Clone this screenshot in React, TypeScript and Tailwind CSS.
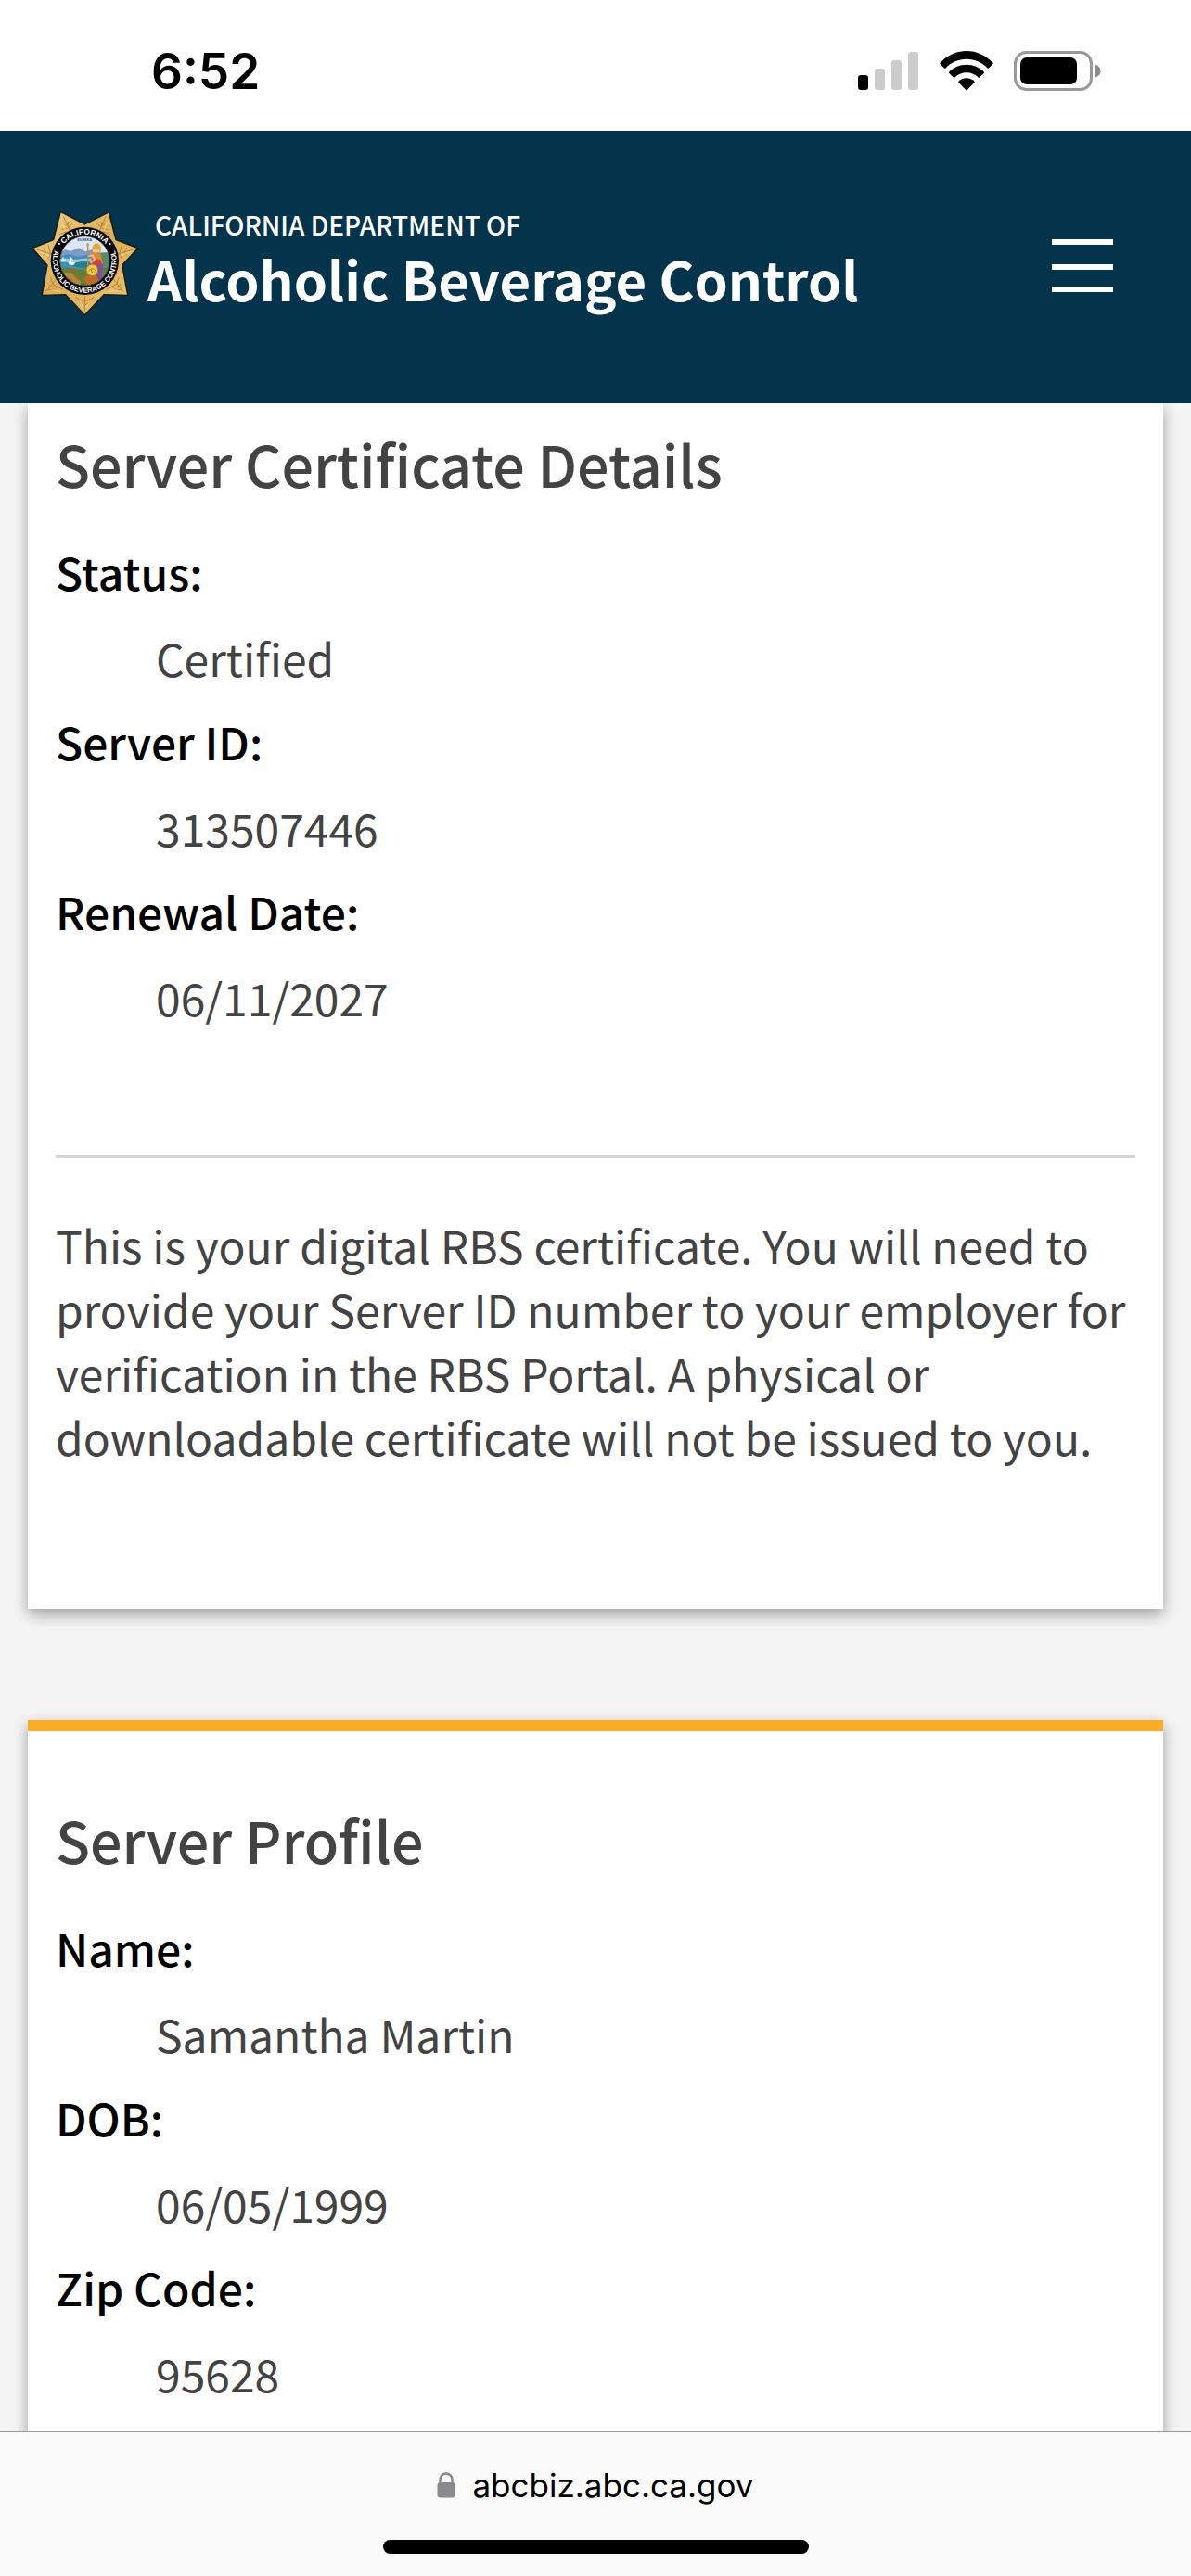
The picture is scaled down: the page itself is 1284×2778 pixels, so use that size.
import React from 'react';

type Field = {
  label: string;
  value: string;
};

const certificateFields: Field[] = [
  { label: 'Status:', value: 'Certified' },
  { label: 'Server ID:', value: '313507446' },
  { label: 'Renewal Date:', value: '06/11/2027' }
];

const profileFields: Field[] = [
  { label: 'Name:', value: 'Samantha Martin' },
  { label: 'DOB:', value: '06/05/1999' },
  { label: 'Zip Code:', value: '95628' }
];

const StatusBar: React.FC = () => (
  <div className="h-[141px] shrink-0 bg-white flex items-center justify-between pl-[163px] pr-[97px] pt-3">
    <span className="font-['Inter',sans-serif] font-semibold text-[53px] leading-[60px] text-black">6:52</span>
    <div className="flex items-center">
      {/* Signal */}
      <svg className="w-[66px] h-[44px]" viewBox="0 0 66 44" aria-hidden="true">
        <rect x="0" y="26" width="11" height="16" rx="3" fill="#000" />
        <rect x="18" y="19" width="11" height="23" rx="3" fill="#ccc" />
        <rect x="36" y="10" width="11" height="32" rx="3" fill="#ccc" />
        <rect x="54" y="1" width="11" height="41" rx="3" fill="#ccc" />
      </svg>
      {/* Wifi */}
      <svg className="w-[58px] h-[44px] ml-[22px]" viewBox="0 0 58 44" aria-hidden="true">
        <path d="M0.5 12.8C8 4.8 18 0 29 0s21 4.8 28.5 12.8a1 1 0 0 1 0 1.3l-4.6 4.4a1 1 0 0 1-1.3 0C45.6 12.3 37.6 8.8 29 8.8S12.4 12.3 6.4 18.5a1 1 0 0 1-1.3 0L0.5 14.1a1 1 0 0 1 0-1.3z" />
        <path d="M10.3 22.6C15 17.7 21.7 14.8 29 14.8s14 2.9 18.7 7.8a1 1 0 0 1 0 1.3l-4.7 4.5a1 1 0 0 1-1.3 0C38.5 25.2 34 23.2 29 23.2s-9.5 2-12.7 5.2a1 1 0 0 1-1.3 0l-4.7-4.5a1 1 0 0 1 0-1.3z" />
        <path d="M20.5 32.8c2.2-2.2 5.2-3.6 8.5-3.6s6.3 1.4 8.5 3.6a1 1 0 0 1 0 1.3l-7.8 7.8a1 1 0 0 1-1.4 0l-7.8-7.8a1 1 0 0 1 0-1.3z" />
      </svg>
      {/* Battery */}
      <svg className="w-[94px] h-[44px] ml-[22px]" viewBox="0 0 94 44" aria-hidden="true">
        <rect x="1.5" y="1.5" width="82" height="40" rx="12" fill="none" stroke="#999" strokeWidth="3" />
        <rect x="7" y="7" width="61" height="29" rx="7" />
        <path d="M88 14.5c3.5 1.3 5.5 4 5.5 7s-2 5.7-5.5 7z" fill="#8a8a8a" />
      </svg>
    </div>
  </div>
);

const Badge: React.FC = () => (
  <svg className="w-[125px] h-[125px] shrink-0" viewBox="0 0 375 375" aria-hidden="true">
    <defs>
      <linearGradient id="gold" x1="0" y1="0" x2="1" y2="1">
        <stop offset="0" stopColor="#f0d08a" />
        <stop offset="0.5" stopColor="#dcae58" />
        <stop offset="1" stopColor="#ecc878" />
      </linearGradient>
      <clipPath id="sealClip">
        <circle cx="184" cy="184" r="80" />
      </clipPath>
      <path id="arcTop" d="M98 184a86 86 0 0 1 172 0" />
      <path id="arcBottom" d="M90.6 140.5A103 103 0 1 0 277.4 140.5" />
    </defs>
    <path
      d="M106 25L184 66L262 27L285 116L356 143L305 198L323 295L246 293L184 359L122 293L46 295L63 198L15 143L83 116z"
      fill="url(#gold)"
      stroke="#1b1a12"
      strokeWidth="4"
      strokeLinejoin="round"
    />
    {/* Engraved leaves on the points */}
    <g fill="none" stroke="#b98534" strokeWidth="3" strokeLinecap="round">
      <path d="M116 42l22 48M120 66l8 4l3-12M110 82l16-2l18-16M102 98l22-8" />
      <path d="M252 42l-22 48M248 66l-8 4l-3-12M258 82l-16-2l-18-16M266 98l-22-8" />
      <path d="M32 148l46 14M50 142l8 14l-8 10M66 134l8 26l-8 18" />
      <path d="M338 148l-46 14M320 142l-8 14l8 10M304 134l-8 26l8 18" />
      <path d="M60 282l32-40M66 258l8 8l20 4M74 238l6 20l32 18M64 278l24-2" />
      <path d="M308 282l-32-40M302 258l-8 8l-20 4M294 238l-6 20l-32 18M304 278l-24-2" />
      <path d="M184 346v-46M170 318l14 10l14-10M154 302l30 14l30-14" />
    </g>
    <g fill="none" stroke="#f9e3a3" strokeWidth="2" strokeLinecap="round">
      <path d="M108 56l14 30M260 56l-14 30M40 156l30 12M328 156l-30 12M78 278l28 6M290 278l-28 6M178 334l-8-18M190 334l8-18" />
    </g>
    <circle cx="184" cy="184" r="110" fill="#060606" />
    <g clipPath="url(#sealClip)">
      <rect x="100" y="100" width="168" height="168" fill="#dbe6f6" />
      <path d="M100 160l20-12l20 4l24-10l22 12l24-8l30 14l32-6v40H100z" fill="#7e9cc4" />
      <path d="M100 172l30-10l34 8l40-8l64 12v60H100z" fill="#3f8fc0" />
      <path d="M100 178c30-8 44 6 70 0s60 4 98-4v10c-40 8-70-2-100 4s-46-4-68 2z" fill="#8fcde4" />
      <path d="M150 192c20-8 50-6 60 2s-20 14-40 12s-30-8-20-14z" fill="#2b7f86" />
      <path d="M232 160c12-6 24-2 36 2v40h-36z" fill="#5a8a6a" />
      <path d="M100 212c20-8 40-6 60-2s60 4 108-8v70H100z" fill="#5f7f35" />
      <path d="M112 226c14-8 30-4 42 4s20 20 14 40l-50-10z" fill="#a98b3c" />
      <path d="M130 214l14 4l8-6M124 240l20 8M150 230l16 16" stroke="#c5562e" strokeWidth="5" fill="none" />
      {/* Ships */}
      <path d="M130 188h24l-5 9h-14zM106 180h16l-4 5h-9z" fill="#fff" />
      <path d="M140 172v18M136 184l4-10l6 10M114 172v8" stroke="#fff" strokeWidth="3" fill="none" />
      {/* Minerva */}
      <path d="M194 126v74" stroke="#c18a4b" strokeWidth="4" />
      <circle cx="194" cy="132" r="5" fill="#d9a25b" />
      <path d="M204 160c6-6 28-6 32 4l8 34l-4 46h-44l8-40z" fill="#d88a2c" />
      <path d="M224 190l20 4l-4 50h-20z" fill="#7a4f9c" />
      <path d="M206 176l28 4l8 18l-32 2z" fill="#cc4148" />
      <path d="M196 168l14-2l6 14l-14 10" stroke="#efbf8f" strokeWidth="6" fill="none" />
      <circle cx="219" cy="148" r="10" fill="#f0c596" />
      <path d="M208 146c0-20 22-28 28-8c2 8 1 16-2 22l-6-14z" fill="#e2a92f" />
      <circle cx="208" cy="214" r="19" fill="#ecc84a" stroke="#a8732a" strokeWidth="3" />
      <path d="M197 218c4-10 18-12 23 0M203 210l6 12" stroke="#b77d2c" strokeWidth="3" fill="none" />
      <path d="M178 240l18-10l26 4l12 18l-40 14z" fill="#bd6b28" />
    </g>
    <circle cx="184" cy="184" r="80" fill="none" stroke="#2c2c2c" strokeWidth="2" />
    <g fill="#fff" className="font-['Liberation_Sans',sans-serif] font-bold">
      <text fontSize="25" textAnchor="middle">
        <textPath href="#arcTop" startOffset="50%">CALIFORNIA</textPath>
      </text>
      <text fontSize="23" textAnchor="middle">
        <textPath href="#arcBottom" startOffset="50%">ALCOHOLIC BEVERAGE CONTROL</textPath>
      </text>
    </g>
    <circle cx="102" cy="129" r="3" fill="#fff" />
    <circle cx="266" cy="129" r="3" fill="#fff" />
    <text x="184" y="121" fontSize="11" textAnchor="middle" fill="#2c4a86" className="font-['Liberation_Sans',sans-serif] font-bold">
      EUREKA
    </text>
  </svg>
);

const Header: React.FC = () => (
  <header className="h-[294px] shrink-0 bg-[#03344b] text-white flex items-start justify-between pl-[30px] pr-[84px] pt-[79px]">
    <a href="#home" className="flex items-start">
      <Badge />
      <span className="flex flex-col pl-1">
        <span className="pl-2 text-[28px] leading-[44px] font-medium">CALIFORNIA DEPARTMENT OF</span>
        <span className="text-[58px] leading-[72px] font-bold">Alcoholic Beverage Control</span>
      </span>
    </a>
    <button type="button" aria-label="Menu" className="mt-[38px]">
      <svg className="w-[66px] h-[57px]" viewBox="0 0 66 57" fill="#fff" aria-hidden="true">
        <rect y="0" width="66" height="6" />
        <rect y="27" width="66" height="6" />
        <rect y="51" width="66" height="6" />
      </svg>
    </button>
  </header>
);

const FieldList: React.FC<{ fields: Field[] }> = ({ fields }) => (
  <dl className="text-[48px] leading-[69px]">
    {fields.map((field) => (
      <div key={field.label} className="mb-[21px]">
        <dt className="mb-6 font-medium text-black">{field.label}</dt>
        <dd className="pl-[108px]">{field.value}</dd>
      </div>
    ))}
  </dl>
);

export default function App() {
  return (
    <div className="h-screen flex flex-col overflow-hidden bg-[#f4f4f4] font-['Noto_Sans_CJK_SC',sans-serif] text-[#434343]">
      <StatusBar />
      <Header />

      <main className="flex-1 min-h-0 overflow-hidden px-[30px]">
        {/* Certificate */}
        <section className="bg-white px-[30px] pt-[26px] pb-[151px] shadow-[0_6px_15px_rgba(0,0,0,0.35)]">
          <h2 className="mb-[43px] text-[61px] leading-[78px] font-medium">Server Certificate Details</h2>
          <FieldList fields={certificateFields} />
          <hr className="mt-[136px] mb-[59px] border-t-[3px] border-[#d6d6d6]" />
          <p className="text-[48px] leading-[69px]">
            This is your digital RBS certificate. You will need to provide your Server ID number to your employer for
            verification in the RBS Portal. A physical or downloadable certificate will not be issued to you.
          </p>
        </section>

        {/* Profile */}
        <section className="mt-[120px] bg-white border-t-[12px] border-[#fdad25] px-[30px] pt-[78px] pb-[151px] shadow-[0_6px_15px_rgba(0,0,0,0.35)]">
          <h2 className="mb-[43px] text-[61px] leading-[78px] font-medium">Server Profile</h2>
          <FieldList fields={profileFields} />
        </section>
      </main>

      <footer className="h-[156px] shrink-0 bg-[#fafafa] border-t border-[#999] flex flex-col items-center pt-[35px]">
        <div className="flex items-center gap-[18px]">
          <svg className="w-[20px] h-[28px]" viewBox="0 0 20 28" aria-hidden="true">
            <path d="M3.5 13V8a6.5 6.5 0 0 1 13 0v5" fill="none" stroke="#8a8a8e" strokeWidth="2.5" />
            <rect x="0.5" y="11" width="19" height="16.5" rx="3" fill="#8a8a8e" />
          </svg>
          <span className="font-['Inter',sans-serif] text-[35px] leading-[44px] text-black">abcbiz.abc.ca.gov</span>
        </div>
        <div className="mt-[37px] w-[459px] h-[15px] rounded-full bg-black"></div>
      </footer>
    </div>
  );
}
